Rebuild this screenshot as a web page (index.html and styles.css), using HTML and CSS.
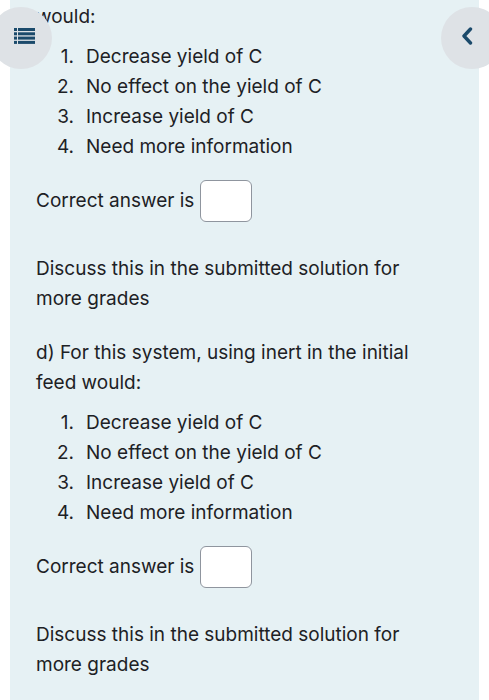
FILE: index.html
```html
<!DOCTYPE html>
<html>
<head>
<meta charset="utf-8">
<link rel="stylesheet" href="styles.css">
</head>
<body>
<div class="panel">
  <p class="lead">would:</p>
  <ol class="choices">
    <li><span class="num">1.</span>Decrease yield of C</li>
    <li><span class="num">2.</span>No effect on the yield of C</li>
    <li><span class="num">3.</span>Increase yield of C</li>
    <li><span class="num">4.</span>Need more information</li>
  </ol>
  <div class="answer">Correct answer is <span class="box"></span></div>
  <p class="discuss">Discuss this in the submitted solution for more grades</p>
  <p class="question">d) For this system, using inert in the initial feed would:</p>
  <ol class="choices">
    <li><span class="num">1.</span>Decrease yield of C</li>
    <li><span class="num">2.</span>No effect on the yield of C</li>
    <li><span class="num">3.</span>Increase yield of C</li>
    <li><span class="num">4.</span>Need more information</li>
  </ol>
  <div class="answer">Correct answer is <span class="box"></span></div>
  <p class="discuss">Discuss this in the submitted solution for more grades</p>
</div>
<div class="fab fab-left">
  <svg width="21" height="16" viewBox="0 0 21 16">
    <g fill="#1b4a6b">
      <rect x="0" y="0" width="3" height="3"/><rect x="4" y="0" width="17" height="3"/>
      <rect x="0" y="4.3" width="3" height="3"/><rect x="4" y="4.3" width="17" height="3"/>
      <rect x="0" y="8.6" width="3" height="3"/><rect x="4" y="8.6" width="17" height="3"/>
      <rect x="0" y="12.9" width="3" height="3"/><rect x="4" y="12.9" width="17" height="3"/>
    </g>
  </svg>
</div>
<div class="fab fab-right">
  <svg width="12" height="18" viewBox="0 0 12 18">
    <path d="M9.5 2 L3 9 L9.5 16" fill="none" stroke="#1b4a6b" stroke-width="3.4" stroke-linecap="round" stroke-linejoin="round"/>
  </svg>
</div>
</body>
</html>
```
FILE: styles.css
```css
html, body {
  margin: 0;
  padding: 0;
  background: #ffffff;
  overflow: hidden;
}
body {
  width: 489px;
  height: 700px;
  position: relative;
  font-family: Inter, "Liberation Sans", sans-serif;
  font-size: 19px;
  line-height: 30px;
  color: #1d2125;
}
.panel {
  margin-left: 10px;
  width: 469px;
  height: 700px;
  box-sizing: border-box;
  background: #e6f1f4;
  padding: 2px 55px 0 26px;
}
p {
  margin: 0;
}
.choices {
  list-style: none;
  margin: 10px 0 18px 0;
  padding: 0;
}
.choices li {
  display: flex;
}
.num {
  width: 38px;
  padding-right: 12px;
  text-align: right;
  flex: none;
}
.answer {
  display: flex;
  align-items: center;
  height: 42px;
  gap: 6px;
}
.box {
  width: 50px;
  height: 40px;
  border: 1px solid #8f959e;
  border-radius: 6px;
  background: #ffffff;
}
.discuss {
  margin-top: 32px;
}
.question {
  margin-top: 24px;
}
.fab {
  position: absolute;
  top: 7px;
  width: 62px;
  height: 62px;
  border-radius: 50%;
  background: #dee2e6;
  display: flex;
  align-items: center;
  justify-content: center;
}
.fab-left {
  left: -10px;
  padding-left: 6px;
  box-sizing: border-box;
  padding-bottom: 4px;
}
.fab-right {
  left: 441px;
  justify-content: flex-start;
  padding-left: 20px;
  padding-bottom: 4px;
  box-sizing: border-box;
}
```
